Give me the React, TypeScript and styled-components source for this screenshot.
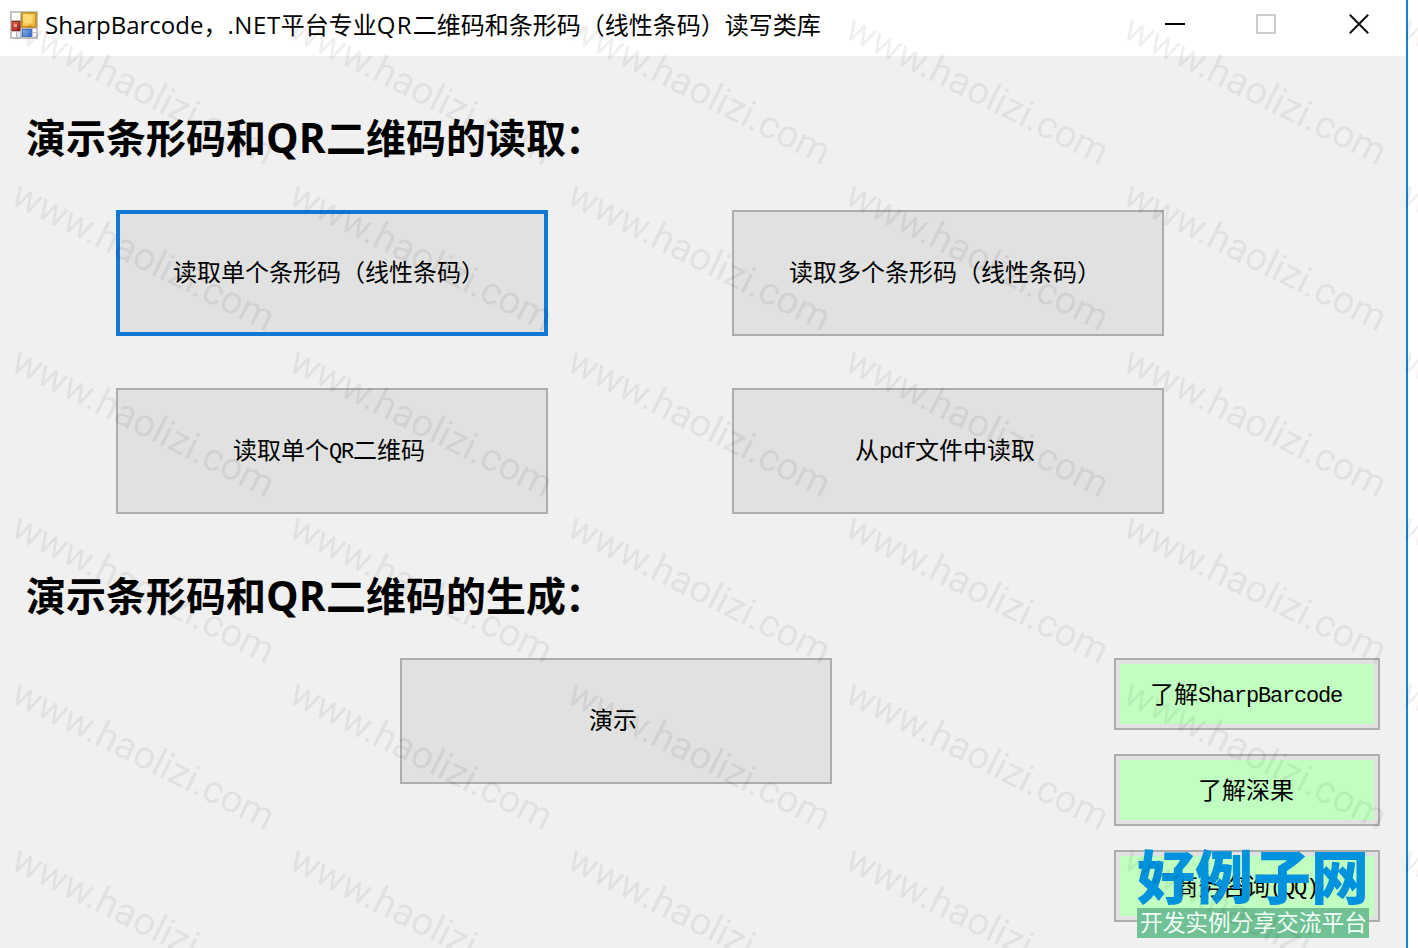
import React from "react";
import styled, { createGlobalStyle } from "styled-components";

const GlobalStyle = createGlobalStyle`
  * { box-sizing: border-box; }
  body { margin: 0; background: #fff; overflow: hidden; }
`;

const Screen = styled.div`
  position: relative;
  width: 1418px;
  height: 948px;
  overflow: hidden;
  background: #fff;
  color: #000;
`;

const Window = styled.div`
  display: flex;
  flex-direction: column;
  width: 1408px;
  height: 948px;
  border-right: 2px solid #1883d7;
`;

const TitleBar = styled.header`
  display: flex;
  align-items: flex-start;
  height: 56px;
  padding: 11px 37px 0 10px;
  background: #fff;
`;

const Title = styled.h1`
  flex: 1;
  margin: -1px 0 0 7px;
  font: 400 24px/30px "Open Sans", "Noto Sans CJK SC", sans-serif;
  white-space: nowrap;
`;

const Latin = styled.span<{ $spacing: number }>`
  letter-spacing: ${(p) => p.$spacing}px;
`;

const Controls = styled.div`
  display: flex;
  gap: 71px;
  padding-top: 3px;

  & > :last-child {
    margin-left: 2px;
  }
`;

const Client = styled.main`
  flex: 1;
  background: #f0f0f0;
`;

const Heading = styled.h2`
  height: 60px;
  margin: 0;
  padding-left: 26px;
  font: 700 40px/60px "Open Sans", "Noto Sans CJK SC", sans-serif;
  white-space: nowrap;
`;

const HeadingLatin = styled.span`
  font-size: 41px;
  line-height: 1;
  letter-spacing: 0.2px;
`;

const Colon = styled.span`
  margin-left: -1px;
`;

const Section = styled.section`
  padding-top: 52px;
`;

const ReadGrid = styled.div`
  display: grid;
  grid-template-columns: 432px 432px;
  column-gap: 184px;
  row-gap: 52px;
  padding: 42px 0 0 116px;
`;

const WriteRow = styled.div`
  display: flex;
  align-items: flex-start;
  gap: 282px;
  padding: 32px 0 0 400px;
`;

const LinkColumn = styled.div`
  display: flex;
  flex-direction: column;
  gap: 24px;
`;

const BaseButton = styled.button`
  display: flex;
  align-items: center;
  justify-content: center;
  margin: 0;
  color: #000;
  font: 400 24px/28px "Noto Sans CJK SC", sans-serif;
  white-space: nowrap;
`;

const DemoButton = styled(BaseButton)<{ $focused?: boolean }>`
  width: 432px;
  height: 126px;
  padding: 0 6px 4px 0;
  border: ${(p) => (p.$focused ? "4px solid #1079d8" : "2px solid #adadad")};
  background: #e1e1e1;
`;

const LinkButton = styled(BaseButton)`
  width: 266px;
  height: 72px;
  padding: 0 2px 3px 0;
  border: 2px solid #adadad;
  background: #c1ffc1;
  box-shadow: inset 0 0 0 4px #e1e1e1;
`;

const Label = styled.span`
  display: block;
  height: 28px;
`;

const Mono = styled.span`
  font-family: "Liberation Mono", monospace;
  font-size: 22px;
  line-height: 1;
  letter-spacing: -1.2px;
  vertical-align: 1px;
`;

const WatermarkLayer = styled.svg`
  position: absolute;
  inset: 0;
  pointer-events: none;
`;

const SiteBadge = styled.div`
  position: absolute;
  left: 1137px;
  top: 842px;
  width: 232px;
`;

const SiteName = styled.div`
  height: 66px;
  color: #0092dd;
  font: 900 58px/64px "Noto Sans CJK SC", sans-serif;
  white-space: nowrap;
`;

const SiteSlogan = styled.div`
  height: 30px;
  padding-left: 3px;
  background: #70c294;
  color: #f2fff6;
  font: 400 22.7px/28px "Noto Sans CJK SC", sans-serif;
  white-space: nowrap;
`;

const AppIcon = () => (
  <svg width="28" height="28" viewBox="0 0 28 28">
    <defs>
      <linearGradient id="gold" x1="0" y1="0" x2="1" y2="1">
        <stop offset="0" stopColor="#ffe58a" />
        <stop offset="1" stopColor="#e9a820" />
      </linearGradient>
      <linearGradient id="red" x1="0" y1="0" x2="1" y2="1">
        <stop offset="0" stopColor="#df7565" />
        <stop offset="1" stopColor="#a31614" />
      </linearGradient>
      <linearGradient id="blue" x1="0" y1="0" x2="1" y2="1">
        <stop offset="0" stopColor="#93bdf5" />
        <stop offset="1" stopColor="#2b65c9" />
      </linearGradient>
    </defs>
    <rect width="28" height="28" fill="#c3c3c3" />
    <rect x="2" y="2" width="8" height="7" fill="#fff" />
    <rect x="2" y="21" width="4" height="5" fill="#fff" />
    <rect x="7" y="21" width="3" height="5" fill="#f4f4f4" />
    <rect x="23" y="18" width="3" height="3" fill="#fff" />
    <rect x="23" y="22" width="3" height="4" fill="#f4f4f4" />
    <rect x="12" y="2" width="14" height="14" fill="url(#gold)" stroke="#c08a16" strokeWidth="1.5" />
    <rect x="14.5" y="4.5" width="8" height="8" fill="#ffdc78" />
    <rect x="2" y="10.5" width="8" height="9" fill="url(#red)" stroke="#a02018" />
    <rect x="4" y="13" width="3" height="3" fill="#ee9c8c" />
    <rect x="12.5" y="18.5" width="9" height="7" fill="url(#blue)" stroke="#3d72cc" />
  </svg>
);

const MinimizeIcon = () => (
  <svg width="20" height="20"><rect y="9" width="20" height="2" fill="#000" /></svg>
);

const MaximizeIcon = () => (
  <svg width="20" height="20">
    <rect x="1" y="1" width="18" height="18" fill="none" stroke="#ccc" strokeWidth="2" />
  </svg>
);

const CloseIcon = () => (
  <svg width="20" height="20">
    <path d="M.8.8 19.2 19.2M19.2.8.8 19.2" stroke="#111" strokeWidth="2" />
  </svg>
);

const marks = Array.from({ length: 6 }, (_, row) =>
  Array.from({ length: 6 }, (_, col) => ({ x: 9 + col * 278, y: 37 + row * 166.2 }))
).flat();

const Watermark = () => (
  <WatermarkLayer width="1418" height="948" viewBox="0 0 1418 948">
    {marks.map(({ x, y }) => (
      <text
        key={`${x}-${y}`}
        transform={`translate(${x} ${y}) rotate(26.6)`}
        fontFamily="Roboto, sans-serif"
        fontSize="38.5"
        textLength="288"
        fill="#000"
        fillOpacity="0.075"
      >
        www.haolizi.com
      </text>
    ))}
  </WatermarkLayer>
);

export default function App() {
  return (
    <Screen>
      <GlobalStyle />
      <Window>
        <TitleBar>
          <AppIcon />
          <Title>
            SharpBarcode，<Latin $spacing={0.6}>.NET</Latin>平台专业
            <Latin $spacing={1.2}>QR</Latin>二维码和条形码（线性条码）读写类库
          </Title>
          <Controls>
            <MinimizeIcon />
            <MaximizeIcon />
            <CloseIcon />
          </Controls>
        </TitleBar>
        <Client>
          <Section>
            <Heading>演示条形码和<HeadingLatin>QR</HeadingLatin>二维码的读取<Colon>：</Colon></Heading>
            <ReadGrid>
              <DemoButton $focused><Label>读取单个条形码（线性条码）</Label></DemoButton>
              <DemoButton><Label>读取多个条形码（线性条码）</Label></DemoButton>
              <DemoButton><Label>读取单个<Mono>QR</Mono>二维码</Label></DemoButton>
              <DemoButton><Label>从<Mono>pdf</Mono>文件中读取</Label></DemoButton>
            </ReadGrid>
          </Section>
          <Section>
            <Heading>演示条形码和<HeadingLatin>QR</HeadingLatin>二维码的生成<Colon>：</Colon></Heading>
            <WriteRow>
              <DemoButton><Label>演示</Label></DemoButton>
              <LinkColumn>
                <LinkButton><Label>了解<Mono>SharpBarcode</Mono></Label></LinkButton>
                <LinkButton><Label>了解深果</Label></LinkButton>
                <LinkButton><Label>商务咨询<Mono>(QQ)</Mono></Label></LinkButton>
              </LinkColumn>
            </WriteRow>
          </Section>
        </Client>
      </Window>
      <SiteBadge>
        <SiteName>好例子网</SiteName>
        <SiteSlogan>开发实例分享交流平台</SiteSlogan>
      </SiteBadge>
      <Watermark />
    </Screen>
  );
}
